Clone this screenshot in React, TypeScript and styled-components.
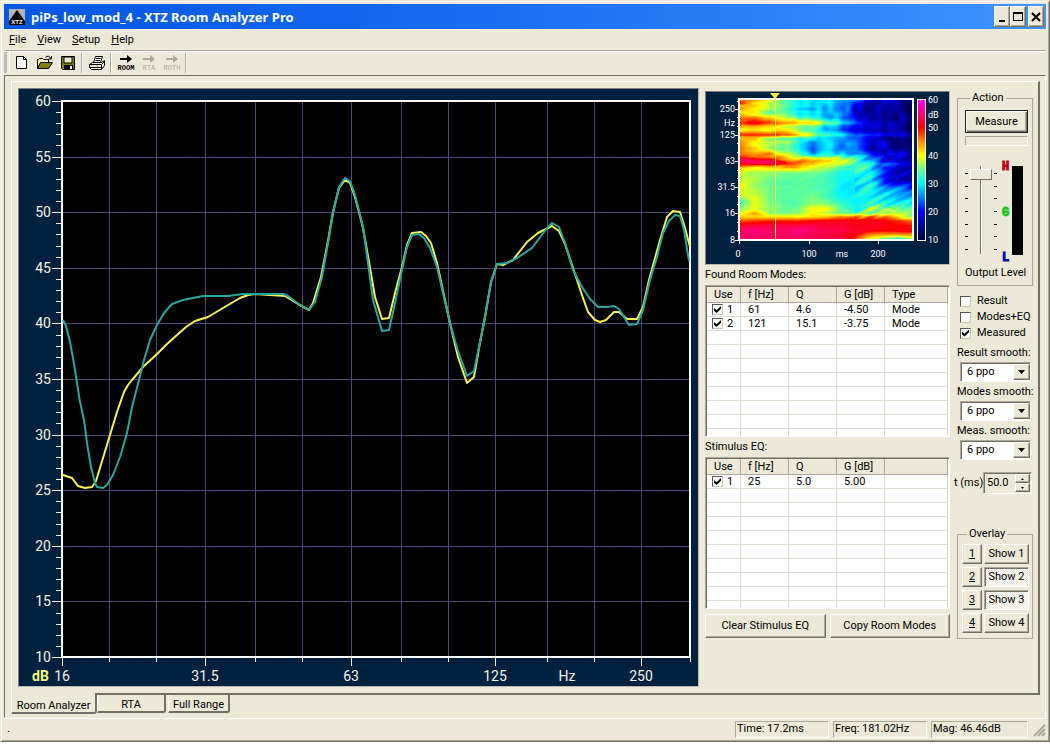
import React from 'react';
import styled, { createGlobalStyle, css } from 'styled-components';

const face = '#ece9d8';
const shade = '#aca899';
const dark = '#716f64';
const navy = '#00203f';
const uiFont = 'Roboto, "Liberation Sans", sans-serif';

const GlobalStyle = createGlobalStyle`
  * { box-sizing: border-box; }
  body { margin: 0; background: #fff; color: #000; font: 11px/14px ${uiFont}; }
  button, input, select { font: inherit; color: inherit; margin: 0; }
`;

const raised = css`
  border: 1px solid;
  border-color: #fff ${dark} ${dark} #fff;
  box-shadow: inset -1px -1px 0 ${shade};
`;
const sunken = css`
  border: 1px solid;
  border-color: ${shade} #fff #fff ${shade};
  box-shadow: inset 1px 1px 0 ${dark};
`;

/* ---------- window frame ---------- */
const Window = styled.div`
  background: ${face};
  border: 1px solid;
  border-color: ${face} ${dark} ${dark} ${face};
  box-shadow: inset 1px 1px 0 #fff, inset -1px -1px 0 ${shade};
  padding: 3px;
`;
const TitleBar = styled.header`
  display: flex;
  align-items: center;
  height: 25px;
  padding: 0 2px 0 5px;
  gap: 6px;
  background: linear-gradient(90deg, #0055e3, #1a6cf0 45%, #3d95ff);
  color: #fff;
`;
const Title = styled.h1`
  flex: 1;
  margin: 0;
  font: bold 13px/16px "Noto Sans", "Open Sans", sans-serif;
`;
const CaptionButtons = styled.div`
  display: flex;
  button:last-child { margin-left: 2px; }
`;
const CaptionButton = styled.button`
  ${raised}
  width: 16px;
  height: 21px;
  padding: 0;
  display: grid;
  place-items: center;
  background: ${face};
`;
const MenuBar = styled.nav`
  display: flex;
  gap: 11px;
  height: 22px;
  padding: 4px 5px 0;
  border-bottom: 1px solid ${shade};
  a { color: inherit; text-decoration: none; }
`;
const ToolBar = styled.div`
  display: flex;
  align-items: center;
  height: 24px;
  padding-bottom: 2px;
  border-top: 1px solid #fff;
`;
const Grip = styled.span`
  width: 6px;
  height: 21px;
  border-left: 3px solid #b9bdb6;
  border-right: 1px solid #fff;
`;
const ToolButton = styled.button`
  width: 23px;
  height: 21px;
  padding: 0;
  border: 0;
  background: none;
  display: grid;
  place-items: center;
`;
const Divider = styled.span`
  width: 2px;
  height: 20px;
  margin: 0 2px;
  border-left: 1px solid ${shade};
  border-right: 1px solid #fff;
`;
const Workspace = styled.main`
  border: 1px solid;
  border-color: ${dark} #fff ${face} ${dark};
  padding: 5px 5px 3px 6px;
`;
const Sheet = styled.section`
  display: grid;
  grid-template-columns: minmax(0, 1fr) 247px 79px;
  column-gap: 4px;
  align-items: start;
  padding: 6px 5px 6px 6px;
  border-style: solid;
  border-width: 1px 2px 2px 1px;
  border-color: #fff ${dark} ${dark} #fff;
`;

/* ---------- charts ---------- */
const Panel = styled.figure`
  margin: 0;
  border: 1px solid;
  border-color: #808080 #b8b8b0 #b8b8b0 #808080;
  background: ${navy};
  svg { display: block; width: 100%; height: auto; }
`;
const ChartSvg = styled.svg`
  font: 14px ${uiFont};
  fill: #f4f4e4;
`;
const HeatSvg = styled.svg`
  font: 9px ${uiFont};
  fill: #fff;
`;

/* ---------- tables ---------- */
const Middle = styled.div`
  padding: 3px 0 0 2px;
`;
const ListLabel = styled.h2`
  margin: 0;
  font: inherit;
  line-height: 20px;
`;
const ListBox = styled.div`
  ${sunken}
  height: 152px;
  overflow: hidden;
  background: #fff;
  padding: 1px;
`;
const ListTable = styled.table`
  width: 100%;
  table-layout: fixed;
  border-collapse: separate;
  border-spacing: 0;
  th, td { font-weight: normal; text-align: left; padding: 0 0 0 7px; white-space: nowrap; }
  th {
    height: 16px;
    line-height: 15px;
    background: ${face};
    border-right: 1px solid ${shade};
    border-bottom: 1px solid ${shade};
  }
  td {
    height: 14px;
    line-height: 13px;
    border-right: 1px solid #dedcd0;
    border-bottom: 1px solid #dedcd0;
  }
  td:first-child { padding-left: 5px; }
`;
const CheckLabel = styled.label<{ $gap: number }>`
  display: flex;
  align-items: center;
  gap: ${(p) => p.$gap}px;
`;
const CheckBox = styled.input`
  appearance: none;
  width: 11px;
  height: 11px;
  background: #fff;
  border: 1px solid;
  border-color: #555 #c8c5b8 #c8c5b8 #555;
  display: grid;
  place-items: center;
  &:checked::after {
    content: '';
    width: 7px;
    height: 7px;
    background: #000;
    clip-path: polygon(0 30%, 36% 62%, 100% 0, 100% 40%, 36% 100%, 0 68%);
  }
`;
const ButtonRow = styled.div`
  display: flex;
  gap: 4px;
  margin-top: 5px;
`;
const PushButton = styled.button<{ $pressed?: boolean }>`
  ${(p) => (p.$pressed ? sunken : raised)}
  flex: 1;
  height: 24px;
  padding: 0;
  background: ${face};
  white-space: nowrap;
`;
const DefaultButton = styled(PushButton)`
  flex: none;
  height: 23px;
  border-color: #222;
  box-shadow: inset 1px 1px 0 #fff, inset -1px -1px 0 ${dark}, inset -2px -2px 0 ${shade};
`;
const SmallButton = styled(PushButton)`
  height: 20px;
  ${(p) => p.$pressed && css`background: repeating-conic-gradient(#fff 0 25%, ${face} 0 50%) 0 0 / 2px 2px;`}
  &:first-child { flex: 0 0 20px; text-decoration: underline; }
`;

/* ---------- control column ---------- */
const Controls = styled.aside`
  padding-top: 3px;
  display: flex;
  flex-direction: column;
`;
const Group = styled.fieldset`
  min-width: 0;
  margin: 0 0 0 3px;
  border: 1px solid ${shade};
  legend { padding: 0 2px; margin-left: 5px; line-height: 14px; }
`;
const ActionGroup = styled(Group)`
  padding: 5px 4px 5px 7px;
`;
const ActionStack = styled.div`
  display: flex;
  flex-direction: column;
`;
const OverlayGroup = styled(Group)`
  margin-top: 33px;
  padding: 3px 3px 5px 4px;
`;
const OverlayRow = styled.div`
  display: flex;
  gap: 2px;
  & + & { margin-top: 3px; }
`;
const Gauge = styled.div`
  height: 10px;
  margin-top: 3px;
  border: 1px solid;
  border-color: ${shade} #fff #fff ${shade};
`;
const LevelRow = styled.div`
  display: flex;
  height: 92px;
  margin-top: 17px;
`;
const TickColumn = styled.div`
  display: flex;
  flex-direction: column;
  justify-content: space-between;
  padding: 10px 0 5px;
  i { width: 3px; height: 1px; background: #000; }
`;
const LevelSlider = styled.input`
  appearance: none;
  writing-mode: vertical-lr;
  direction: rtl;
  width: 22px;
  height: 88px;
  margin: 3px 2px 0;
  background: linear-gradient(90deg, transparent 10px, ${dark} 10px 11px, #fff 11px 12px, transparent 12px);
  &::-webkit-slider-thumb {
    appearance: none;
    width: 22px;
    height: 11px;
    background: ${face};
    border: 1px solid;
    border-color: #fff ${dark} ${dark} #fff;
  }
`;
const Marks = styled.div`
  display: flex;
  flex-direction: column;
  justify-content: space-between;
  width: 9px;
  margin: -2px 1px -9px 5px;
  font: bold 12px/12px "Liberation Mono", monospace;
  -webkit-text-stroke: 1px;
  span:nth-child(1) { color: #c00010; }
  span:nth-child(2) { color: #1cc81c; }
  span:nth-child(3) { color: #0000a8; }
`;
const Meter = styled.div`
  width: 11px;
  height: 89px;
  margin-top: 3px;
  background: #000;
`;
const OutputCaption = styled.div`
  margin-top: 11px;
  white-space: nowrap;
`;
const CheckGroup = styled.div`
  margin: 7px 0 2px 6px;
  line-height: 16px;
`;
const Field = styled.div`
  display: grid;
  margin-left: 6px;
  grid-template-columns: 71px;
  grid-template-rows: 19px 20px;
  align-items: stretch;
  label { line-height: 19px; white-space: nowrap; margin-left: -3px; }
`;
const Select = styled.select`
  ${sunken}
  appearance: none;
  grid-area: 2 / 1;
  background: #fff;
  border-radius: 0;
  padding: 0 6px;
`;
const DropArrow = styled.span`
  ${raised}
  grid-area: 2 / 1;
  justify-self: end;
  margin: 2px 1px 2px 0;
  width: 17px;
  background: ${face};
  display: grid;
  place-items: center;
  pointer-events: none;
`;
const SpinRow = styled.div`
  display: flex;
  align-items: center;
  margin-top: 12px;
  label { width: 29px; white-space: nowrap; }
`;
const SpinBox = styled.div`
  ${sunken}
  display: flex;
  width: 49px;
  height: 22px;
  padding: 1px;
  input { width: 30px; border: 0; padding: 0 0 0 2px; background: transparent; outline: 0; }
`;
const SpinButtons = styled.div`
  flex: 1;
  display: flex;
  flex-direction: column;
  button { ${raised} flex: 1; min-height: 0; padding: 0; background: ${face}; display: grid; place-items: center; }
`;

/* ---------- tabs and status ---------- */
const Tabs = styled.div`
  display: flex;
  align-items: flex-start;
`;
const Tab = styled.button<{ $active?: boolean; $width: number }>`
  width: ${(p) => p.$width}px;
  height: ${(p) => (p.$active ? 21 : 18)}px;
  margin-top: ${(p) => (p.$active ? -2 : 0)}px;
  padding: ${(p) => (p.$active ? 6 : 2)}px 0 0;
  line-height: 13px;
  background: ${face};
  border: solid;
  border-width: 0 2px 2px 1px;
  border-color: ${dark} ${dark} ${dark} #fff;
  border-radius: 0 0 3px 0;
  margin-right: ${(p) => (p.$active ? 0 : 2)}px;
  white-space: nowrap;
`;
const StatusBar = styled.footer`
  display: flex;
  gap: 4px;
  padding: 2px 0 0 3px;
  border-top: 1px solid #fff;
`;
const StatusText = styled.div`
  flex: 1;
  line-height: 16px;
`;
const StatusField = styled.div<{ $width: number }>`
  width: ${(p) => p.$width}px;
  height: 17px;
  padding-left: 1px;
  border: 1px solid;
  border-color: ${shade} #fff #fff ${shade};
`;

/* ---------- response chart data (plot coordinates) ---------- */
const GRID_X = [47, 94, 143, 193, 240, 289, 339, 386, 433, 485, 532, 579];
const MAJOR_X: [number, string][] = [[0, '16'], [143, '31.5'], [289, '63'], [433, '125'], [579, '250']];
const LEVELS = [60, 55, 50, 45, 40, 35, 30, 25, 20, 15, 10];
const PLOT_H = 556;
const dbToY = (db: number) => Math.round(((60 - db) * PLOT_H) / 50);

const MEASURED =
  '0,374 1,374 10,377 16,385 23,387 30,386 34,380 41,357 48,334 55,311 62,291 66,284 70,279 81,266 95,253 105,243 115,234 124,226 133,220 146,216 161,207 178,197 186,194 193,193 223,195 236,203 247,209 251,202 259,176 266,140 271,111 277,87 283,79 288,82 293,96 298,115 301,127 307,161 313,196 320,218 327,217 333,192 340,166 345,144 350,132 359,131 364,135 369,142 375,162 381,190 388,222 396,256 405,282 412,276 417,247 423,216 429,181 435,163 441,164 451,159 465,141 476,132 490,125 497,130 503,143 515,179 521,197 526,211 533,219 538,221 544,219 552,211 557,211 565,218 575,218 581,206 587,179 598,139 605,116 611,110 618,111 623,127 628,146';
const MODELLED =
  '1,219 4,225 8,241 11,257 15,282 18,301 22,319 25,342 29,366 33,382 35,386 41,387 45,384 51,374 58,356 65,332 70,306 77,279 82,259 88,239 95,224 102,212 110,203 121,199 141,195 166,195 181,193 221,193 226,195 238,204 247,209 253,201 260,176 266,142 271,112 277,86 283,77 288,80 293,94 298,114 301,126 306,162 311,199 320,230 327,229 333,202 340,169 345,146 350,134 357,133 362,137 368,147 375,166 381,192 388,222 395,247 405,275 412,270 417,246 423,216 429,181 435,163 445,162 455,157 470,147 485,127 490,122 497,126 503,142 511,169 520,186 528,198 536,206 546,206 552,205 557,208 567,224 575,223 581,209 588,179 595,156 601,132 607,120 613,114 618,115 622,129 627,160';

function ResponseChart() {
  const minor = Array.from({ length: 51 }, (_, i) => dbToY(10 + i));
  return (
    <Panel>
      <ChartSvg viewBox="0 0 679 597" role="img" aria-label="Frequency response">
        <g transform="translate(43 12)">
          <g shapeRendering="crispEdges" fill="none">
            <rect width="628" height={PLOT_H} fill="#000" />
            <path
              stroke="#4b4878"
              d={GRID_X.map((x) => `M${x}.5 0V${PLOT_H}`).join('') + LEVELS.map((l) => `M0 ${dbToY(l)}.5H628`).join('')}
            />
            <path stroke="#f4f4e4" d={minor.map((y) => `M-6 ${y}.5H0`).join('') + LEVELS.map((l) => `M-10 ${dbToY(l)}.5H0`).join('')} />
            <path
              stroke="#f4f4e4"
              d={[0, ...GRID_X, 628].map((x) => `M${x}.5 556V561`).join('') + MAJOR_X.map(([x]) => `M${x}.5 556V565`).join('')}
            />
            <rect width="628" height={PLOT_H} stroke="#fff" strokeWidth="2" />
          </g>
          <g fill="none" strokeWidth="2" strokeLinejoin="round">
            <polyline stroke="#f4f450" points={MEASURED} />
            <polyline stroke="#2aa6a0" points={MODELLED} />
          </g>
          {LEVELS.map((l) => (
            <text key={l} x="-11" y={dbToY(l) + 5} textAnchor="end">{l}</text>
          ))}
          {MAJOR_X.map(([x, t]) => (
            <text key={t} x={x} y="580" textAnchor="middle">{t}</text>
          ))}
          <text x="505" y="580" textAnchor="middle">Hz</text>
          <text x="-30" y="580" fill="#f6f67c" fontWeight="bold">dB</text>
        </g>
      </ChartSvg>
    </Panel>
  );
}

/* ---------- decay map: level in dB, columns over time, rows over frequency ---------- */
const MAP_W = 173;
const MAP_H = 139;
const DECAY: [number, number[]][] = [
  [0, [50, 45, 38, 34, 31, 30, 28, 27, 24, 20, 18, 17, 12]],
  [3, [47, 43, 36, 34, 30, 29, 28, 26, 20, 16, 16, 16, 12]],
  [9, [44, 41, 36, 33, 29, 28, 27, 27, 18, 15, 16, 14, 14]],
  [14, [42, 41, 35, 35, 31, 30, 28, 29, 16, 15, 15, 15, 13]],
  [18, [44, 44, 42, 39, 34, 31, 29, 27, 17, 15, 15, 15, 13]],
  [23, [51, 50, 48, 44, 42, 40, 37, 32, 22, 16, 16, 15, 13]],
  [26, [46, 44, 43, 40, 36, 34, 30, 26, 18, 16, 16, 14, 12]],
  [30, [42, 41, 39, 40, 35, 32, 28, 24, 16, 15, 15, 14, 12]],
  [35, [51, 50, 48, 47, 43, 37, 32, 29, 24, 24, 22, 20, 14]],
  [38, [43, 42, 38, 36, 32, 30, 27, 25, 24, 20, 16, 14, 12]],
  [44, [44, 40, 36, 36, 32, 25, 29, 27, 28, 18, 18, 13, 11]],
  [49, [45, 42, 38, 35, 33, 24, 28, 25, 27, 17, 17, 14, 12]],
  [54, [44, 44, 44, 38, 34, 26, 30, 27, 26, 24, 18, 20, 14]],
  [58, [51, 50, 47, 43, 41, 40, 38, 37, 31, 26, 20, 17, 17]],
  [61, [54, 54, 52, 49, 46, 45, 42, 38, 34, 28, 20, 17, 18]],
  [64, [52, 51, 51, 50, 45, 42, 40, 37, 36, 30, 26, 22, 20]],
  [68, [42, 41, 41, 42, 42, 39, 37, 34, 33, 30, 20, 18, 17]],
  [73, [38, 37, 36, 35, 35, 35, 34, 31, 30, 29, 22, 18, 16]],
  [80, [39, 37, 35, 34, 34, 34, 33, 30, 30, 30, 21, 18, 15]],
  [88, [40, 37, 35, 34, 34, 34, 33, 30, 30, 30, 27, 24, 20]],
  [96, [38, 39, 35, 34, 34, 35, 33, 31, 30, 31, 29, 26, 26]],
  [103, [33, 40, 36, 34, 34, 36, 36, 32, 30, 34, 31, 31, 31]],
  [109, [36, 39, 36, 35, 35, 41, 40, 34, 31, 38, 37, 34, 34]],
  [113, [38, 44, 36, 35, 36, 40, 37, 34, 34, 36, 35, 36, 36]],
  [117, [42, 42, 42, 41, 41, 41, 43, 46, 46, 47, 45, 40, 38]],
  [121, [47, 48, 49, 49, 49, 50, 51, 51, 51, 51, 50, 49, 46]],
  [126, [52, 53, 53, 53, 53, 53, 52, 52, 51, 51, 51, 50, 50]],
  [131, [54, 55, 54, 54, 55, 54, 53, 53, 52, 50, 50, 51, 50]],
  [136, [54, 54, 54, 54, 54, 53, 52, 52, 49, 44, 42, 41, 43]],
  [139, [54, 54, 54, 54, 54, 54, 54, 53, 48, 40, 34, 30, 38]],
];
const SCALE: [number, number[]][] = [
  [10, [0, 0, 56]],
  [20, [0, 0, 255]],
  [30, [0, 245, 255]],
  [35, [110, 255, 140]],
  [40, [255, 255, 0]],
  [45, [255, 140, 0]],
  [50, [255, 0, 0]],
  [60, [255, 0, 255]],
];

function colourOf(db: number) {
  const v = Math.min(60, Math.max(10, db));
  const i = Math.max(1, SCALE.findIndex(([d]) => d >= v));
  const [d0, a] = SCALE[i - 1];
  const [d1, b] = SCALE[i];
  const t = (v - d0) / (d1 - d0);
  return `rgb(${a.map((c, k) => Math.round(c + (b[k] - c) * t)).join(',')})`;
}

/* smooth pseudo-random field in -1..1 */
function hash(i: number, j: number) {
  const s = Math.sin(i * 127.1 + j * 311.7) * 43758.5453;
  return (s - Math.floor(s)) * 2 - 1;
}
function noise(x: number, y: number) {
  const i = Math.floor(x);
  const j = Math.floor(y);
  const u = x - i;
  const v = y - j;
  const su = u * u * (3 - 2 * u);
  const sv = v * v * (3 - 2 * v);
  return (hash(i, j) * (1 - su) + hash(i + 1, j) * su) * (1 - sv) + (hash(i, j + 1) * (1 - su) + hash(i + 1, j + 1) * su) * sv;
}

function levelAt(x: number, y: number) {
  const r = Math.max(1, DECAY.findIndex(([d]) => d >= y));
  const [y0, a] = DECAY[r - 1];
  const [y1, b] = DECAY[r];
  const ty = (y - y0) / (y1 - y0);
  const cx = Math.min(11.999, (x / MAP_W) * 12);
  const c = Math.floor(cx);
  const tx = cx - c;
  const base = (a[c] * (1 - tx) + a[c + 1] * tx) * (1 - ty) + (b[c] * (1 - tx) + b[c + 1] * tx) * ty;
  const late = Math.min(1, x / 110);
  const calm = y > 119 ? 0.15 : y > 68 && x < 115 ? 0.25 : 1;
  const early = noise(x / 14, y / 3) * 3 * (1 - late);
  const tail = y < 55 ? noise(x / 6, y / 9) * 3 * late : noise((x + y) / 12, (y + x * 0.45) / 4) * 3.5 * late;
  return base + (early + tail) * calm;
}

/* one path per half-decibel step, made of horizontal runs */
function buildMap() {
  const runs = new Map<number, string>();
  for (let y = 0; y < MAP_H; y++) {
    let start = 0;
    let last = Math.round(levelAt(0, y + 0.5) * 2);
    for (let x = 1; x <= MAP_W; x++) {
      const q = x < MAP_W ? Math.round(levelAt(x, y + 0.5) * 2) : NaN;
      if (q !== last) {
        runs.set(last, (runs.get(last) || '') + `M${start} ${y}h${x - start}v1h${start - x}z`);
        start = x;
        last = q;
      }
    }
  }
  return [...runs.entries()];
}
const MAP_RUNS = buildMap();
const FREQS: [number, string][] = [[9, '250'], [35, '125'], [61, '63'], [87, '31.5'], [113, '16'], [140, '8']];
const MINOR_FREQS = [1, 17, 26, 43, 52, 70, 78, 96, 104, 122, 131];

function DecayMap() {
  return (
    <Panel>
      <HeatSvg viewBox="0 0 243 172" role="img" aria-label="Decay map">
        <defs>
          <linearGradient id="scale" x1="0" y1="0" x2="0" y2="1">
            {[...SCALE].reverse().map(([d]) => (
              <stop key={d} offset={(60 - d) / 50} stopColor={colourOf(d)} />
            ))}
          </linearGradient>
        </defs>
        <g transform="translate(34 8)">
          <g shapeRendering="crispEdges">
            {MAP_RUNS.map(([q, d]) => <path key={q} d={d} fill={colourOf(q / 2)} />)}
            <rect x="-1" y="-1" width="174" height="141" fill="none" stroke="#fff" strokeWidth="2" />
            <rect x="177" y="-1" width="8" height="141" fill="url(#scale)" stroke="#fff" />
            <path
              stroke="#fff"
              d={FREQS.map(([y]) => `M-5 ${y}.5h4`).join('') + MINOR_FREQS.map((y) => `M-3 ${y}.5h2`).join('') + 'M-.5 140v4M69.5 140v4M138.5 140v4'}
            />
            <path stroke="#f4f450" d="M35.5 -4V139" />
          </g>
          <path d="M30 -7h10l-5 6z" fill="#f4f450" />
          {FREQS.map(([y, t]) => <text key={t} x="-5" y={y + 3} textAnchor="end">{t}</text>)}
          <text x="-5" y="26" textAnchor="end">Hz</text>
          {[60, 50, 40, 30, 20, 10].map((d) => <text key={d} x="188" y={3 + (60 - d) * 2.8}>{d}</text>)}
          <text x="188" y="18">dB</text>
          <g textAnchor="middle">
            <text x="-2" y="157">0</text>
            <text x="69" y="157">100</text>
            <text x="102" y="157">ms</text>
            <text x="138" y="157">200</text>
          </g>
        </g>
      </HeatSvg>
    </Panel>
  );
}

function ModeList({ title, heads, rows }: { title: string; heads: string[]; rows: string[][] }) {
  const blanks = 10 - rows.length;
  return (
    <>
      <ListLabel>{title}</ListLabel>
      <ListBox>
        <ListTable aria-label={title}>
          <colgroup>
            <col width="34" /><col width="48" /><col width="48" /><col width="48" /><col />
          </colgroup>
          <thead>
            <tr>{heads.map((h, i) => <th key={i}>{h}</th>)}</tr>
          </thead>
          <tbody>
            {rows.map((r) => (
              <tr key={r[0]}>
                <td>
                  <CheckLabel $gap={4}><CheckBox type="checkbox" defaultChecked />{r[0]}</CheckLabel>
                </td>
                {r.slice(1).map((c, i) => <td key={i}>{c}</td>)}
              </tr>
            ))}
            {Array.from({ length: blanks }, (_, k) => (
              <tr key={`blank${k}`}>{heads.map((_h, i) => <td key={i} />)}</tr>
            ))}
          </tbody>
        </ListTable>
      </ListBox>
    </>
  );
}

function Triangle({ up, size }: { up?: boolean; size: number }) {
  return (
    <svg width={size * 2 - 1} height={size} viewBox="0 0 10 5" preserveAspectRatio="none" aria-hidden="true">
      <path d={up ? 'M0 5L5 0L10 5z' : 'M0 0h10L5 5z'} />
    </svg>
  );
}

function ModeIcon({ text, off }: { text: string; off?: boolean }) {
  const ink = off ? '#aca899' : '#000';
  return (
    <svg width="22" height="20" viewBox="0 0 22 20" aria-hidden="true">
      <path d="M5 5h7V2l5 4-5 4V7H5z" fill={ink} />
      <text x="11" y="17" textAnchor="middle" fill={ink} fontFamily="Liberation Mono, monospace" fontWeight={off ? 400 : 700} fontSize="7">{text}</text>
    </svg>
  );
}

const SMOOTHING = ['Result smooth:', 'Modes smooth:', 'Meas. smooth:'];
const TICKS = [0, 1, 2, 3, 4, 5, 6];

export default function App() {
  return (
    <>
      <GlobalStyle />
      <Window>
        <TitleBar>
          <svg width="16" height="16" viewBox="0 0 16 16" aria-hidden="true">
            <rect width="16" height="16" fill="#b4b4b0" />
            <path d="M8 1L16 12V16H0V12z" fill="#000" />
            <text x="8" y="15" textAnchor="middle" fontSize="6" fontWeight="700" fontFamily="Liberation Sans, sans-serif" fill="#fff">XTZ</text>
          </svg>
          <Title>piPs_low_mod_4 - XTZ Room Analyzer Pro</Title>
          <CaptionButtons>
            <CaptionButton aria-label="Minimize">
              <svg width="12" height="12"><path d="M3 9h6v2H3z" /></svg>
            </CaptionButton>
            <CaptionButton aria-label="Maximize">
              <svg width="12" height="12"><path d="M1 1h10v9H1zM2 3v6h8V3z" fillRule="evenodd" /></svg>
            </CaptionButton>
            <CaptionButton aria-label="Close">
              <svg width="12" height="12"><path d="M2 2L10 10M10 2L2 10" stroke="#000" strokeWidth="2" /></svg>
            </CaptionButton>
          </CaptionButtons>
        </TitleBar>
        <MenuBar>
          {['File', 'View', 'Setup', 'Help'].map((m) => (
            <a key={m} href={`#${m.toLowerCase()}`}><u>{m[0]}</u>{m.slice(1)}</a>
          ))}
        </MenuBar>
        <ToolBar role="toolbar">
          <Grip />
          <ToolButton aria-label="New">
            <svg width="16" height="16"><path d="M2.500 1.500h7l3 3v9h-10zM9.500 1.500v3h3" fill="#fff" stroke="#000" /></svg>
          </ToolButton>
          <ToolButton aria-label="Open">
            <svg width="18" height="16">
              <path d="M1.500 13.500v-9h1l1-1h3l1 1h5v3" fill="#f7f7a8" stroke="#000" />
              <path d="M1.500 13.500l3-6h12l-4 6z" fill="#808000" stroke="#000" />
              <path d="M9.500 2.500q3-3 5.500 1M15.500 1v3h-3" fill="none" stroke="#000" />
            </svg>
          </ToolButton>
          <ToolButton aria-label="Save">
            <svg width="16" height="16">
              <path d="M1.500 1.500h13v13h-12l-1-1z" fill="#808000" stroke="#000" />
              <path d="M4 2h8v6H4z" fill="#ece9d8" stroke="#000" />
              <path d="M4 10h9v5H4z" />
              <path d="M10 11h2v3h-2z" fill="#fff" />
            </svg>
          </ToolButton>
          <Divider />
          <ToolButton aria-label="Print">
            <svg width="18" height="16">
              <path d="M5.500 7.500l2-6h7l-2 6" fill="#fff" stroke="#000" />
              <path d="M8 3.500h4.500M7.500 5.500h4.500" stroke="#000" />
              <path d="M1.500 9.500l3-2h9l3-2v5l-3 4h-10l-2-2z" fill="#ece9d8" stroke="#000" />
              <path d="M1.500 9.500h12l3-3M13.500 9.500v5M2 12.500h11" fill="none" stroke="#000" />
              <path d="M8 11h3" stroke="#c8c800" />
            </svg>
          </ToolButton>
          <Divider />
          <ToolButton aria-label="Room mode"><ModeIcon text="ROOM" /></ToolButton>
          <ToolButton aria-label="RTA mode" disabled><ModeIcon text="RTA" off /></ToolButton>
          <ToolButton aria-label="Both modes" disabled><ModeIcon text="ROTH" off /></ToolButton>
          <Divider />
        </ToolBar>

        <Workspace>
          <Sheet>
            <ResponseChart />
            <Middle>
              <DecayMap />
              <ModeList
                title="Found Room Modes:"
                heads={['Use', 'f [Hz]', 'Q', 'G [dB]', 'Type']}
                rows={[['1', '61', '4.6', '-4.50', 'Mode'], ['2', '121', '15.1', '-3.75', 'Mode']]}
              />
              <ModeList
                title="Stimulus EQ:"
                heads={['Use', 'f [Hz]', 'Q', 'G [dB]', '']}
                rows={[['1', '25', '5.0', '5.00', '']]}
              />
              <ButtonRow>
                <PushButton>Clear Stimulus EQ</PushButton>
                <PushButton>Copy Room Modes</PushButton>
              </ButtonRow>
            </Middle>
            <Controls>
              <ActionGroup>
                <legend>Action</legend>
                <ActionStack>
                  <DefaultButton>Measure</DefaultButton>
                  <Gauge />
                  <LevelRow>
                    <TickColumn>{TICKS.map((k) => <i key={k} />)}</TickColumn>
                    <LevelSlider type="range" aria-label="Output Level" min={0} max={100} defaultValue={96} />
                    <TickColumn>{TICKS.map((k) => <i key={k} />)}</TickColumn>
                    <Marks><span>H</span><span>G</span><span>L</span></Marks>
                    <Meter />
                  </LevelRow>
                  <OutputCaption>Output Level</OutputCaption>
                </ActionStack>
              </ActionGroup>
              <CheckGroup>
                {['Result', 'Modes+EQ', 'Measured'].map((t) => (
                  <CheckLabel key={t} $gap={6}>
                    <CheckBox type="checkbox" defaultChecked={t === 'Measured'} />{t}
                  </CheckLabel>
                ))}
              </CheckGroup>
              {SMOOTHING.map((t, i) => (
                <Field key={t}>
                  <label htmlFor={`smooth${i}`}>{t}</label>
                  <Select id={`smooth${i}`} defaultValue="6 ppo"><option>6 ppo</option></Select>
                  <DropArrow><Triangle size={4} /></DropArrow>
                </Field>
              ))}
              <SpinRow>
                <label htmlFor="time">t (ms)</label>
                <SpinBox>
                  <input id="time" type="text" defaultValue="50.0" />
                  <SpinButtons>
                    <button aria-label="Increase"><Triangle up size={2} /></button>
                    <button aria-label="Decrease"><Triangle size={2} /></button>
                  </SpinButtons>
                </SpinBox>
              </SpinRow>
              <OverlayGroup>
                <legend>Overlay</legend>
                {[1, 2, 3, 4].map((n) => (
                  <OverlayRow key={n}>
                    <SmallButton>{n}</SmallButton>
                    <SmallButton $pressed={n === 2 || n === 3}>Show {n}</SmallButton>
                  </OverlayRow>
                ))}
              </OverlayGroup>
            </Controls>
          </Sheet>
          <Tabs role="tablist">
            <Tab role="tab" aria-selected $active $width={86}>Room Analyzer</Tab>
            <Tab role="tab" $width={69}>RTA</Tab>
            <Tab role="tab" $width={62}>Full Range</Tab>
          </Tabs>
        </Workspace>
        <StatusBar>
          <StatusText>.</StatusText>
          <StatusField $width={94}>Time: 17.2ms</StatusField>
          <StatusField $width={94}>Freq: 181.02Hz</StatusField>
          <StatusField $width={97}>Mag: 46.46dB</StatusField>
          <svg width="14" height="16" aria-hidden="true">
            <path d="M2 15L13 4M6 15L13 8M10 15L13 12" stroke="#aca899" strokeWidth="2" />
          </svg>
        </StatusBar>
      </Window>
    </>
  );
}
